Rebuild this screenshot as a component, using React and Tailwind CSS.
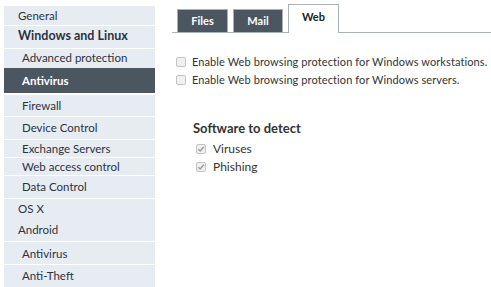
import React from "react";

const font = { fontFamily: "Lato, 'Noto Sans', sans-serif" };

function Row({ h, children, className = "" }) {
  return (
    <div className={`flex items-center bg-[#e7ecf3] text-[#2b3340] text-[11.5px] whitespace-nowrap ${className}`} style={{ height: h }}>
      {children}
    </div>
  );
}

function Box({ checked }) {
  return (
    <span className="w-[10px] h-[10px] rounded-[2px] border border-[#c3c3c3] bg-[#f0f0f0] flex items-center justify-center shrink-0">
      {checked && (
        <svg width="8" height="8" viewBox="0 0 8 8">
          <path d="M1.3 4.2 L3.2 6 L6.8 1.8" fill="none" stroke="#9a9a9a" strokeWidth="1.4" />
        </svg>
      )}
    </span>
  );
}

export default function App() {
  return (
    <div className="w-[491px] h-[287px] bg-white flex overflow-hidden" style={font}>
      <div className="w-[151px] ml-[4px] mt-[6px] flex flex-col gap-px bg-white shrink-0">
        <Row h={19} className="pl-[14px]">General</Row>
        <Row h={22} className="pl-[14px] font-bold !text-[12.5px]">Windows and Linux</Row>
        <Row h={19} className="pl-[18px] -mb-px">Advanced protection</Row>
        <Row h={26} className="pl-[18px] font-bold !bg-[#4b5661] !text-white mb-px">Antivirus</Row>
        <Row h={21} className="pl-[18px]">Firewall</Row>
        <Row h={22} className="pl-[18px]">Device Control</Row>
        <Row h={17} className="pl-[18px]">Exchange Servers</Row>
        <Row h={17} className="pl-[18px]">Web access control</Row>
        <Row h={22} className="pl-[18px]">Data Control</Row>
        <Row h={20} className="pl-[14px] -mb-px">OS X</Row>
        <Row h={23} className="pl-[14px]">Android</Row>
        <Row h={22} className="pl-[18px]">Antivirus</Row>
        <Row h={22} className="pl-[18px]">Anti-Theft</Row>
      </div>
      <div className="flex-1 ml-[17px] flex flex-col min-w-0">
        <div className="mt-[5px] flex items-end gap-[5px] pl-[5px] border-b border-[#a9b1b9] h-[28px]">
          <div className="w-[51px] h-[23px] bg-[#4b5661] border border-b-0 border-[#a9b1b9] text-white font-bold text-[11px] flex items-center justify-center">Files</div>
          <div className="w-[50px] h-[23px] bg-[#4b5661] border border-b-0 border-[#a9b1b9] text-white font-bold text-[11px] flex items-center justify-center">Mail</div>
          <div className="w-[51px] h-[29px] -mb-px bg-white border border-b-0 border-[#a9b1b9] text-[#222] font-bold text-[11px] flex items-center justify-center pb-[4px]">Web</div>
        </div>
        <div className="mt-[23px] pl-[4px] flex flex-col gap-[6px] text-[11px] tracking-[0.1px] text-[#333] whitespace-nowrap">
          <div className="flex items-center gap-[6px] h-[12px]"><Box />Enable Web browsing protection for Windows workstations.</div>
          <div className="flex items-center gap-[6px] h-[12px]"><Box />Enable Web browsing protection for Windows servers.</div>
        </div>
        <div className="mt-[33px] pl-[21px] text-[13px] font-bold text-[#333]">Software to detect</div>
        <div className="mt-[4px] pl-[24px] flex flex-col gap-[6px] text-[12px] text-[#333]">
          <div className="flex items-center gap-[7px] h-[12px]"><Box checked />Viruses</div>
          <div className="flex items-center gap-[7px] h-[12px]"><Box checked />Phishing</div>
        </div>
      </div>
    </div>
  );
}
